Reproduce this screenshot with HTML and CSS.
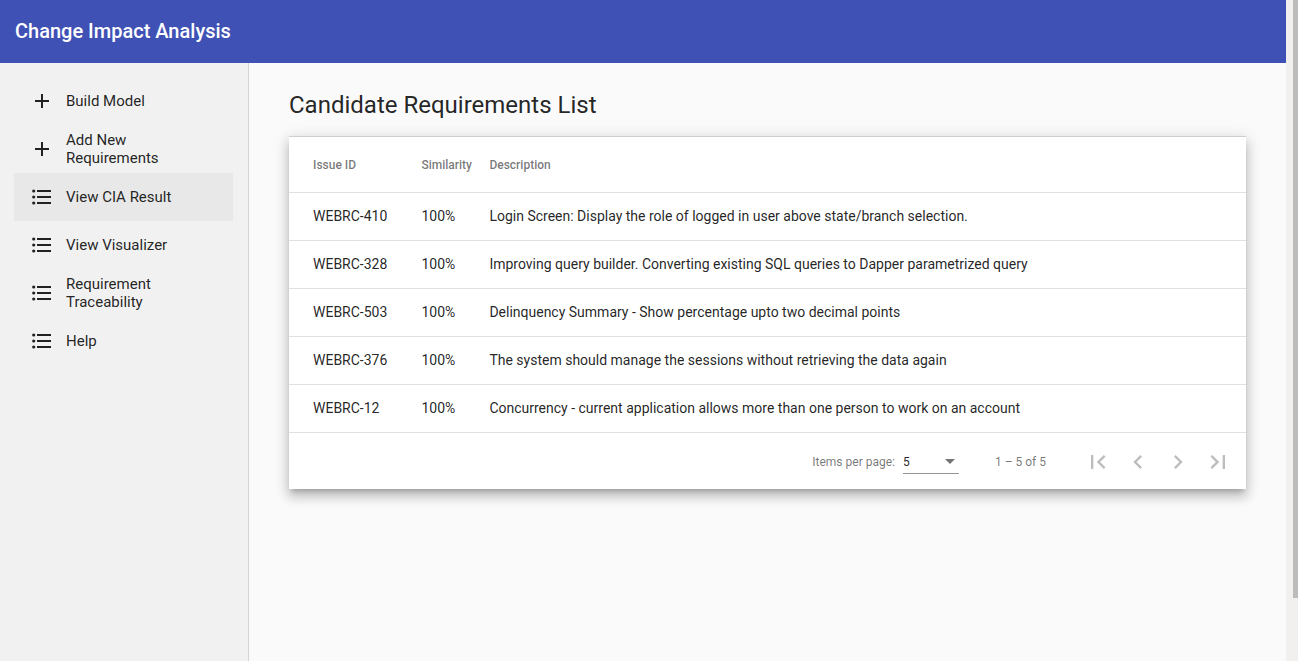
FILE: index.html
```html
<!DOCTYPE html>
<html lang="en">
<head>
<meta charset="utf-8">
<title>Change Impact Analysis</title>
<link rel="stylesheet" href="styles.css">
</head>
<body>
<svg class="defs" aria-hidden="true">
  <symbol id="add" viewBox="0 0 24 24"><path d="M19 13h-6v6h-2v-6H5v-2h6V5h2v6h6v2z"/></symbol>
  <symbol id="list" viewBox="0 0 24 24"><circle cx="3.7" cy="6" r="1.6"/><circle cx="3.7" cy="12" r="1.6"/><circle cx="3.7" cy="18" r="1.6"/><path d="M7 5h14v2H7zM7 11h14v2H7zM7 17h14v2H7z"/></symbol>
</svg>
<div class="window">
  <div class="app">
    <header class="toolbar">Change Impact Analysis</header>
    <div class="body">
      <nav class="sidenav">
        <a class="item"><svg class="icon"><use href="#add"/></svg><span>Build Model</span></a>
        <a class="item"><svg class="icon"><use href="#add"/></svg><span>Add New<br>Requirements</span></a>
        <a class="item active"><svg class="icon"><use href="#list"/></svg><span>View CIA Result</span></a>
        <a class="item"><svg class="icon"><use href="#list"/></svg><span>View Visualizer</span></a>
        <a class="item"><svg class="icon"><use href="#list"/></svg><span>Requirement<br>Traceability</span></a>
        <a class="item"><svg class="icon"><use href="#list"/></svg><span>Help</span></a>
      </nav>
      <main class="content">
        <h1 class="title">Candidate Requirements List</h1>
        <section class="card">
          <table class="table">
            <thead><tr><th class="id">Issue ID</th><th class="sim">Similarity</th><th>Description</th></tr></thead>
            <tbody>
              <tr><td>WEBRC-410</td><td>100%</td><td>Login Screen: Display the role of logged in user above state/branch selection.</td></tr>
              <tr><td>WEBRC-328</td><td>100%</td><td>Improving query builder. Converting existing SQL queries to Dapper parametrized query</td></tr>
              <tr><td>WEBRC-503</td><td>100%</td><td>Delinquency Summary - Show percentage upto two decimal points</td></tr>
              <tr><td>WEBRC-376</td><td>100%</td><td>The system should manage the sessions without retrieving the data again</td></tr>
              <tr><td>WEBRC-12</td><td>100%</td><td>Concurrency - current application allows more than one person to work on an account</td></tr>
            </tbody>
          </table>
          <div class="paginator">
            <span class="per-page">Items per page:</span>
            <div class="select"><span>5</span><i class="arrow"></i></div>
            <span class="range">1 – 5 of 5</span>
            <div class="pager">
              <svg viewBox="0 0 24 24"><path d="M18.41 16.59L13.82 12l4.59-4.59L17 6l-6 6 6 6zM6 6h2v12H6z"/></svg>
              <svg viewBox="0 0 24 24"><path d="M15.41 7.41L14 6l-6 6 6 6 1.41-1.41L10.83 12z"/></svg>
              <svg viewBox="0 0 24 24"><path d="M10 6L8.59 7.41 13.17 12l-4.58 4.59L10 18l6-6z"/></svg>
              <svg viewBox="0 0 24 24"><path d="M5.59 7.41L10.18 12l-4.59 4.59L7 18l6-6-6-6zM16 6h2v12h-2z"/></svg>
            </div>
          </div>
        </section>
      </main>
    </div>
  </div>
  <div class="scrollbar"><div class="thumb"></div></div>
</div>
</body>
</html>
```

FILE: styles.css
```css
* { box-sizing: border-box; }
body { margin: 0; font-family: Roboto, "Liberation Sans", sans-serif; color: rgba(0,0,0,.87); background: #fafafa; overflow: hidden; }
.defs { display: none; }
.window { display: flex; height: 661px; }
.app { flex: 1; display: flex; flex-direction: column; min-width: 0; }
.toolbar { height: 63px; padding: 0 15px; background: #3f51b5; color: #fff; font-size: 20px; font-weight: 500; line-height: 62px; }
.body { flex: 1; display: flex; min-height: 0; }
.sidenav { width: 249px; padding: 14px 15px 0 14px; background: #f1f1f1; border-right: 1px solid #d4d4d4; }
.item { display: flex; align-items: center; gap: 12px; height: 48px; padding-left: 16px; font-size: 15px; line-height: 18px; }
.item.active { background: #e8e8e8; }
.icon { width: 24px; height: 24px; fill: #212121; }
.content { flex: 1; padding: 26px 40px 0; }
.title { margin: 0 0 15px; font-size: 24px; font-weight: 400; line-height: 32px; }
.card { background: #fff; border-top: 1px solid #cecece; box-shadow: 0 5px 5px -3px rgba(0,0,0,.2), 0 8px 10px 1px rgba(0,0,0,.14), 0 3px 14px 2px rgba(0,0,0,.12); }
.table { width: 100%; border-collapse: separate; border-spacing: 0; table-layout: fixed; }
.table th, .table td { padding: 0; text-align: left; border-bottom: 1px solid #e0e0e0; }
.table th { height: 56px; font-size: 12px; font-weight: 500; color: rgba(0,0,0,.54); }
.table td { height: 48px; padding-bottom: 1px; font-size: 14px; }
.table th:first-child, .table td:first-child { padding-left: 24px; }
.id { width: 132.4px; }
.sim { width: 68px; }
.paginator { display: flex; align-items: center; justify-content: flex-end; height: 56px; padding: 2px 14px 0 0; font-size: 12px; color: rgba(0,0,0,.54); }
.select { display: flex; align-items: center; justify-content: space-between; width: 56px; height: 24px; margin: 0 36px 0 8px; padding-right: 4px; border-bottom: 1px solid #949494; color: rgba(0,0,0,.87); }
.arrow { border: 5px solid transparent; border-top-color: #757575; border-bottom: 0; }
.pager { display: flex; gap: 12px; margin-left: 38px; }
.pager svg { width: 28px; height: 28px; fill: #bdbdbd; }
.scrollbar { width: 12px; background: #f1f0ef; padding-left: 7px; }
.thumb { height: 598px; background: #bcbcbc; }
```
